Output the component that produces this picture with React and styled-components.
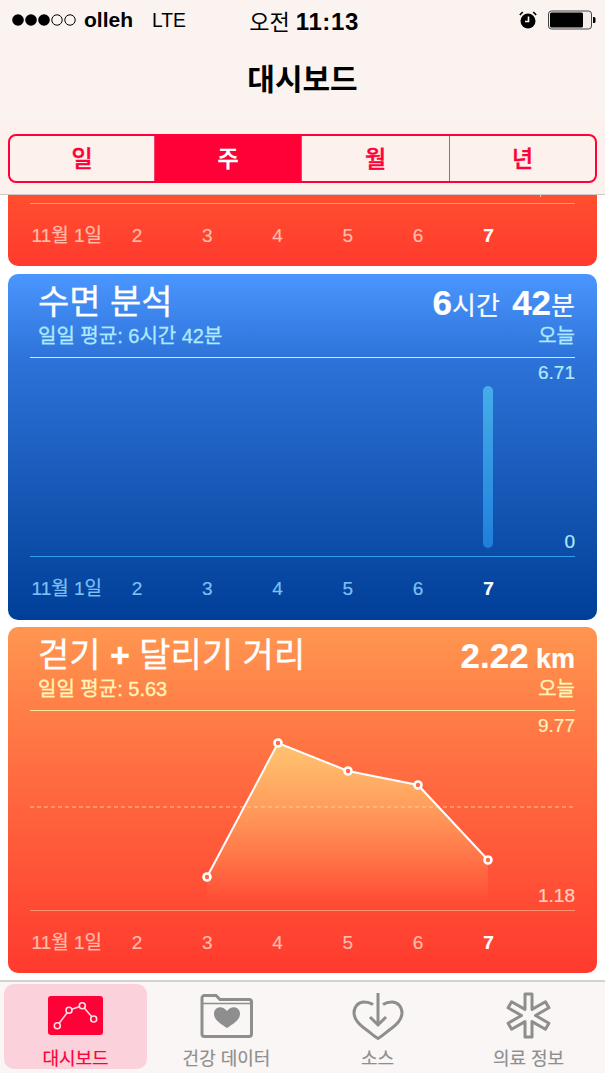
import React from "react";
import styled, { createGlobalStyle } from "styled-components";

const FONT = `"Liberation Sans", "Noto Sans CJK KR", sans-serif`;
const RED = "#ff0037";
const GREY = "#8e8e8e";
const DAYS = ["11월 1일", "2", "3", "4", "5", "6", "7"];
const TABS = ["일", "주", "월", "년"];

const GlobalStyle = createGlobalStyle`
  html, body {
    margin: 0;
    padding: 0;
    background: #ffffff;
    font-family: ${FONT};
  }
`;

const Page = styled.div`
  width: 605px;
  height: 1073px;
  display: flex;
  flex-direction: column;
  overflow: hidden;
  background: #ffffff;
`;

const Header = styled.header`
  height: 121px;
  background: #faf3f0;
  display: flex;
  flex-direction: column;
`;

const StatusBar = styled.div`
  height: 40px;
  padding: 0 9px 0 12px;
  display: grid;
  grid-template-columns: 1fr auto 1fr;
  align-items: center;
  color: #000;
`;

const StatusLeft = styled.div`
  display: flex;
  align-items: center;
`;

const Carrier = styled.span`
  margin-left: 8px;
  font-weight: 700;
  font-size: 21px;
`;

const Network = styled.span`
  margin-left: 19px;
  font-size: 21px;
  transform: scaleX(0.92);
  transform-origin: left;
`;

const Clock = styled.div`
  font-size: 22px;
  b {
    font-size: 24px;
    letter-spacing: 0.6px;
  }
`;

const StatusRight = styled.div`
  display: flex;
  justify-content: flex-end;
  align-items: center;
  gap: 11px;
`;

const Title = styled.h1`
  margin: 0;
  padding-top: 5px;
  text-align: center;
  font-size: 30px;
  line-height: 70px;
  font-weight: 700;
  color: #000;
`;

const SegmentBar = styled.div`
  height: 74px;
  padding: 13px 8px 11px;
  box-sizing: border-box;
  background: #fdf1ee;
  border-bottom: 1px solid #cfcac8;
`;

const Segments = styled.div`
  height: 100%;
  display: grid;
  grid-template-columns: 144px 147px 148px 1fr;
  border: 2px solid ${RED};
  border-radius: 8px;
  box-sizing: border-box;
  overflow: hidden;
`;

const Segment = styled.div`
  display: flex;
  align-items: center;
  justify-content: center;
  padding-bottom: 3px;
  font-size: 23px;
  font-weight: 500;
  -webkit-text-stroke: 0.4px currentColor;
  color: ${(p) => (p.$active ? "#fff" : RED)};
  background: ${(p) => (p.$active ? RED : "transparent")};
  & + & {
    border-left: 1px solid #f0406e;
  }
`;

const Feed = styled.main`
  flex: 1;
  display: flex;
  flex-direction: column;
  gap: 7px;
  padding: 0 8px;
  overflow: hidden;
  min-height: 0;
`;

const Stub = styled.section`
  position: relative;
  height: 71px;
  flex: none;
  margin-bottom: 1px;
  padding: 8px 22px 0;
  box-sizing: border-box;
  border-radius: 0 0 10px 10px;
  background: linear-gradient(#ff4f30, #ff3a2e);
`;

const Speck = styled.span`
  position: absolute;
  right: 56px;
  top: 0;
  width: 1px;
  height: 2px;
  background: #ffc0a8;
`;

const Card = styled.section`
  height: 346px;
  flex: none;
  padding: 0 22px;
  box-sizing: border-box;
  border-radius: 10px;
  display: flex;
  flex-direction: column;
  background: ${(p) => p.$bg};
`;

const CardHead = styled.div`
  height: 83px;
  padding-top: 7px;
  box-sizing: border-box;
  display: grid;
  grid-template-columns: 1fr auto;
  grid-template-rows: 41px 28px;
  color: #fff;
`;

const CardTitle = styled.div`
  padding-left: 8px;
  font-size: 34px;
  line-height: 43px;
  white-space: nowrap;
  -webkit-text-stroke: 0.3px #fff;
  b {
    font-weight: 700;
  }
`;

const Value = styled.div`
  text-align: right;
  font-size: 26px;
  line-height: 43px;
  word-spacing: 5px;
  -webkit-text-stroke: 0.2px #fff;
  b {
    font-size: 35px;
    font-weight: 700;
  }
  i {
    font-style: normal;
    font-weight: 700;
    font-size: 27px;
    margin-left: -5px;
  }
`;

const SubLabel = styled.div`
  padding-left: 8px;
  font-size: 20px;
  line-height: 28px;
  -webkit-text-stroke: 0.3px ${(p) => p.$color};
  color: ${(p) => p.$color};
`;

const SubRight = styled(SubLabel)`
  padding-left: 0;
  text-align: right;
`;

const Plot = styled.div`
  position: relative;
  height: ${(p) => p.$height}px;
  flex: none;
  border-top: 1px solid ${(p) => p.$top};
  border-bottom: 1px solid ${(p) => p.$bottom};
`;

const Scale = styled.span`
  position: absolute;
  right: 0;
  top: ${(p) => (p.$low ? "auto" : "4px")};
  bottom: ${(p) => (p.$low ? "3px" : "auto")};
  font-size: 19px;
  line-height: 22px;
  -webkit-text-stroke: 0.2px ${(p) => p.$color};
  color: ${(p) => p.$color};
`;

const ChartSvg = styled.svg`
  position: absolute;
  left: 0;
  top: 0;
  display: block;
`;

const SleepBar = styled.div`
  position: absolute;
  left: 453px;
  top: 28px;
  width: 10px;
  height: 162px;
  border-radius: 5px;
  background: linear-gradient(#45aee8, #1f7fdc);
`;

const Axis = styled.div`
  display: grid;
  grid-template-columns: repeat(7, 70.3px);
  margin-left: 1.5px;
  padding-top: ${(p) => p.$top}px;
`;

const Tick = styled.span`
  text-align: center;
  font-size: 19px;
  line-height: 24px;
  white-space: nowrap;
  font-weight: ${(p) => (p.$today ? 700 : 400)};
  -webkit-text-stroke: 0.2px currentColor;
  color: ${(p) => (p.$today ? "#fff" : p.$color)};
`;

const TabBar = styled.nav`
  height: 93px;
  flex: none;
  box-sizing: border-box;
  padding: 2px 0 0 4px;
  display: grid;
  grid-template-columns: 147px repeat(3, 151px);
  align-items: start;
  background: #f9f6f5;
  border-top: 2px solid #d6d2d0;
`;

const Tab = styled.div`
  height: 85px;
  margin-right: ${(p) => (p.$active ? "4px" : "0")};
  display: flex;
  flex-direction: column;
  align-items: center;
  padding-top: 4px;
  box-sizing: border-box;
  border-radius: 10px;
  font-size: 18px;
  color: ${(p) => (p.$active ? RED : GREY)};
  background: ${(p) => (p.$active ? "#fbd2dc" : "transparent")};
`;

const IconBox = styled.div`
  height: 56px;
  display: flex;
  align-items: center;
  justify-content: center;
`;

const TabLabel = styled.span`
  margin-top: 6px;
  line-height: 20px;
  white-space: nowrap;
  -webkit-text-stroke: 0.2px currentColor;
`;

const Signal = () => (
  <svg width="64" height="14" viewBox="0 0 64 14">
    {[0, 1, 2, 3, 4].map((i) => (
      <circle
        key={i}
        cx={6 + i * 13}
        cy="7"
        r={i < 3 ? 5.8 : 5.2}
        fill={i < 3 ? "#000" : "none"}
        stroke="#000"
        strokeWidth={i < 3 ? 0 : 1}
      />
    ))}
  </svg>
);

const Alarm = () => (
  <svg width="18" height="18" viewBox="0 0 18 18">
    <circle cx="9" cy="10" r="7.5" fill="#000" />
    <path d="M9.5 5.5v5H6" stroke="#fff" strokeWidth="1.6" fill="none" />
    <path d="M0.8 4l3-3M17.2 4l-3-3" stroke="#000" strokeWidth="1.6" />
  </svg>
);

const Battery = () => (
  <svg width="48" height="20" viewBox="0 0 48 20">
    <rect x="0.5" y="1" width="43" height="18" rx="3" fill="#f2ecea" stroke="#444" />
    <rect x="2" y="2.5" width="33" height="15" rx="1.5" fill="#000" />
    <path d="M45 7h1a1.5 1.5 0 0 1 1.5 1.5v3A1.5 1.5 0 0 1 46 13h-1z" fill="#000" />
  </svg>
);

const DASH_POINTS = [
  [9.3, 29.7],
  [21, 14.3],
  [34.3, 9.7],
  [45.7, 23],
];

const DashIcon = () => (
  <svg width="55" height="39" viewBox="0 0 55 39">
    <rect width="55" height="39" rx="3" fill={RED} />
    <polyline
      points={DASH_POINTS.map((p) => p.join(",")).join(" ")}
      stroke="#fbd2dc"
      strokeWidth="1.6"
      fill="none"
    />
    {DASH_POINTS.map(([x, y]) => (
      <circle key={x} cx={x} cy={y} r="3" fill={RED} stroke="#fbe3e8" strokeWidth="1.6" />
    ))}
  </svg>
);

const FolderIcon = () => (
  <svg width="54" height="44" viewBox="0 0 54 44">
    <path
      d="M2 4a2.5 2.5 0 0 1 2.5-2.5H16l4 4h29a2.5 2.5 0 0 1 2.5 2.5v32a2.5 2.5 0 0 1-2.5 2.5H4.500A2.500 2.500 0 0 1 2 40z"
      fill="none"
      stroke={GREY}
      strokeWidth="3"
    />
    <path d="M3 9.500h48" fill="none" stroke={GREY} strokeWidth="1.500" />
    <path d="M27 34C21 30 14 26 14 20c0-8 9-9 13-3 4-6 13-5 13 3 0 6-7 10-13 14z" fill={GREY} />
  </svg>
);

const SourceIcon = () => (
  <svg width="52" height="48" viewBox="0 0 52 48">
    <path
      d="M21 12.500C18 10.500 15 10 12 10 6 10 2 15 2 21c0 6 3.500 10 10 15 5 3.500 11 9 14 10.500 3-1.500 9-7 14-10.500 6.500-5 10-9 10-15 0-6-4-11-10-11-3 0-6 .500-9 2.500"
      fill="none"
      stroke={GREY}
      strokeWidth="3"
    />
    <path d="M26 1v31M18 25l8 8 8-8" fill="none" stroke={GREY} strokeWidth="3" />
  </svg>
);

// six arm star, outlined
const starPath = () => {
  const c = 23.5;
  const len = 21.5;
  const w = 3.5;
  let d = "";
  for (let k = 0; k < 6; k++) {
    const a = ((90 - k * 60) * Math.PI) / 180;
    const dx = Math.cos(a);
    const dy = -Math.sin(a);
    const inner = a + Math.PI / 6;
    const pts = [
      [c + 7 * Math.cos(inner), c - 7 * Math.sin(inner)],
      [c + len * dx + w * dy, c + len * dy - w * dx],
      [c + len * dx - w * dy, c + len * dy + w * dx],
    ];
    pts.forEach(([x, y], i) => {
      d += `${k === 0 && i === 0 ? "M" : "L"}${x.toFixed(1)} ${y.toFixed(1)}`;
    });
  }
  return d + "Z";
};

const MedicalIcon = () => (
  <svg width="47" height="47" viewBox="0 0 47 47">
    <path d={starPath()} fill="none" stroke={GREY} strokeWidth="3" strokeLinejoin="round" />
  </svg>
);

const points = [
  [177, 166],
  [248, 32],
  [318, 60],
  [388, 74],
  [458, 149],
];

const WalkChart = () => {
  const line = points.map(([x, y]) => `${x},${y}`).join(" ");
  return (
    <ChartSvg width="545" height="199" viewBox="0 0 545 199">
      <defs>
        <linearGradient id="walkFill" x1="0" y1="32" x2="0" y2="190" gradientUnits="userSpaceOnUse">
          <stop offset="0" stopColor="#ffc873" stopOpacity="0.95" />
          <stop offset="1" stopColor="#ffc873" stopOpacity="0" />
        </linearGradient>
      </defs>
      <polygon points={`177,199 ${line} 458,199`} fill="url(#walkFill)" />
      <line
        x1="0"
        y1="96"
        x2="545"
        y2="96"
        stroke="#ffd9a8"
        strokeOpacity="0.85"
        strokeDasharray="4 3"
      />
      <polyline points={line} fill="none" stroke="#fff" strokeWidth="2" />
      {points.map(([x, y]) => (
        <circle key={x} cx={x} cy={y} r="3.5" fill="#ff6a45" stroke="#fff" strokeWidth="2.6" />
      ))}
    </ChartSvg>
  );
};

const AxisRow = ({ color, top }) => (
  <Axis $top={top}>
    {DAYS.map((d, i) => (
      <Tick key={d} $color={color} $today={i === 6}>
        {d}
      </Tick>
    ))}
  </Axis>
);

export default function App() {
  return (
    <Page>
      <GlobalStyle />
      <Header>
        <StatusBar>
          <StatusLeft>
            <Signal />
            <Carrier>olleh</Carrier>
            <Network>LTE</Network>
          </StatusLeft>
          <Clock>
            오전 <b>11:13</b>
          </Clock>
          <StatusRight>
            <Alarm />
            <Battery />
          </StatusRight>
        </StatusBar>
        <Title>대시보드</Title>
      </Header>

      <SegmentBar>
        <Segments>
          {TABS.map((t) => (
            <Segment key={t} $active={t === "주"}>
              {t}
            </Segment>
          ))}
        </Segments>
      </SegmentBar>

      <Feed>
        <Stub>
          <Speck />
          <Plot $height={0} $top="#ff9a70" $bottom="transparent" />
          <AxisRow color="#ffbcaa" top={19} />
        </Stub>

        <Card $bg="linear-gradient(#4a96ff, #2d72d8 25%, #0f50ac 75%, #003f98)">
          <CardHead>
            <CardTitle>수면 분석</CardTitle>
            <Value>
              <b>6</b>시간 <b>42</b>분
            </Value>
            <SubLabel $color="#aeeaff">일일 평균: 6시간 42분</SubLabel>
            <SubRight $color="#aeeaff">오늘</SubRight>
          </CardHead>
          <Plot $height={198} $top="#cfeaff" $bottom="#2f9cf0">
            <Scale $color="#aeeaff">6.71</Scale>
            <Scale $low $color="#aeeaff">0</Scale>
            <SleepBar />
          </Plot>
          <AxisRow color="#7cc0f4" top={20} />
        </Card>

        <Card $bg="linear-gradient(#ff9650, #ff6a40 45%, #ff3a2e)">
          <CardHead>
            <CardTitle>
              걷기 <b>+</b> 달리기 거리
            </CardTitle>
            <Value>
              <b>2.22</b> <i>km</i>
            </Value>
            <SubLabel $color="#fff6b8">일일 평균: 5.63</SubLabel>
            <SubRight $color="#fff6b8">오늘</SubRight>
          </CardHead>
          <Plot $height={199} $top="#ffe89a" $bottom="#ff9070">
            <Scale $color="#fff0c0">9.77</Scale>
            <Scale $low $color="#ffd0c0">1.18</Scale>
            <WalkChart />
          </Plot>
          <AxisRow color="#ffbcaa" top={20} />
        </Card>
      </Feed>

      <TabBar>
        <Tab $active>
          <IconBox>
            <DashIcon />
          </IconBox>
          <TabLabel>대시보드</TabLabel>
        </Tab>
        <Tab>
          <IconBox>
            <FolderIcon />
          </IconBox>
          <TabLabel>건강 데이터</TabLabel>
        </Tab>
        <Tab>
          <IconBox>
            <SourceIcon />
          </IconBox>
          <TabLabel>소스</TabLabel>
        </Tab>
        <Tab>
          <IconBox>
            <MedicalIcon />
          </IconBox>
          <TabLabel>의료 정보</TabLabel>
        </Tab>
      </TabBar>
    </Page>
  );
}
